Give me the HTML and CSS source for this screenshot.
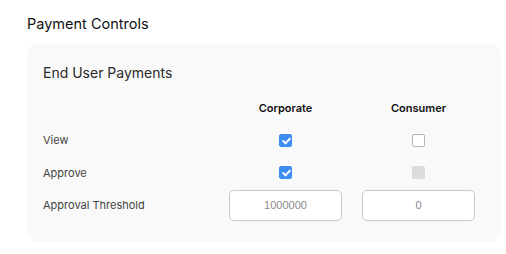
FILE: index.html
```html
<!DOCTYPE html>
<html>
<head>
<meta charset="utf-8">
<link rel="stylesheet" href="styles.css">
</head>
<body>
<div class="page">
  <h1 class="title">Payment Controls</h1>
  <section class="card">
    <h2 class="card-title">End User Payments</h2>
    <div class="grid">
      <div class="cell"></div>
      <div class="cell head">Corporate</div>
      <div class="cell head">Consumer</div>

      <div class="cell label">View</div>
      <div class="cell center"><span class="cb checked"></span></div>
      <div class="cell center"><span class="cb"></span></div>

      <div class="cell label">Approve</div>
      <div class="cell center"><span class="cb checked"></span></div>
      <div class="cell center"><span class="cb disabled"></span></div>

      <div class="cell label">Approval Threshold</div>
      <div class="cell center"><input class="num" type="text" value="1000000"></div>
      <div class="cell center"><input class="num" type="text" value="0"></div>
    </div>
  </section>
</div>
</body>
</html>
```

FILE: styles.css
```css
* { box-sizing: border-box; }
body {
  margin: 0;
  background: #ffffff;
  font-family: Inter, "Noto Sans", sans-serif;
  color: #222;
}
.page {
  padding: 14px 5px 0 27px;
}
.title {
  margin: 0;
  font-size: 14.5px;
  font-weight: 400;
  line-height: 20px;
  color: #111;
}
.card {
  margin-top: 9px;
  background: #f9f9f9;
  border-radius: 12px;
  padding: 20px 26px 21px 16px;
}
.card-title {
  margin: 0;
  font-size: 14px;
  font-weight: 400;
  line-height: 20px;
  color: #2a2a2a;
}
.grid {
  display: grid;
  grid-template-columns: 1fr 113px 113px;
  column-gap: 20px;
  grid-template-rows: 32px 32px 33px 32px;
  margin-top: 9px;
  align-items: center;
}
.cell {
  font-size: 11px;
  display: flex;
  align-items: center;
  height: 100%;
}
.head {
  justify-content: center;
  font-weight: 600;
  color: #111;
}
.label {
  color: #444;
}
.center {
  justify-content: center;
}
.cb {
  display: block;
  width: 13px;
  height: 13px;
  border: 1px solid #b5b5b5;
  border-radius: 2px;
  background: #fff;
  position: relative;
}
.cb.checked {
  background: #3c8ef3;
  border-color: #3c8ef3;
}
.cb.checked::after {
  content: "";
  position: absolute;
  left: 3.5px;
  top: 1px;
  width: 3px;
  height: 6px;
  border: solid #fff;
  border-width: 0 2px 2px 0;
  transform: rotate(45deg);
}
.cb.disabled {
  background: #dcdcdc;
  border-color: #dcdcdc;
}
.num {
  width: 113px;
  height: 31px;
  border: 1px solid #c8c8c8;
  border-radius: 5px;
  background: #fff;
  text-align: center;
  font-family: "Liberation Sans", Arial, sans-serif;
  font-size: 11px;
  color: #8a8a8a;
  padding: 0 6px;
  outline: none;
}
```
